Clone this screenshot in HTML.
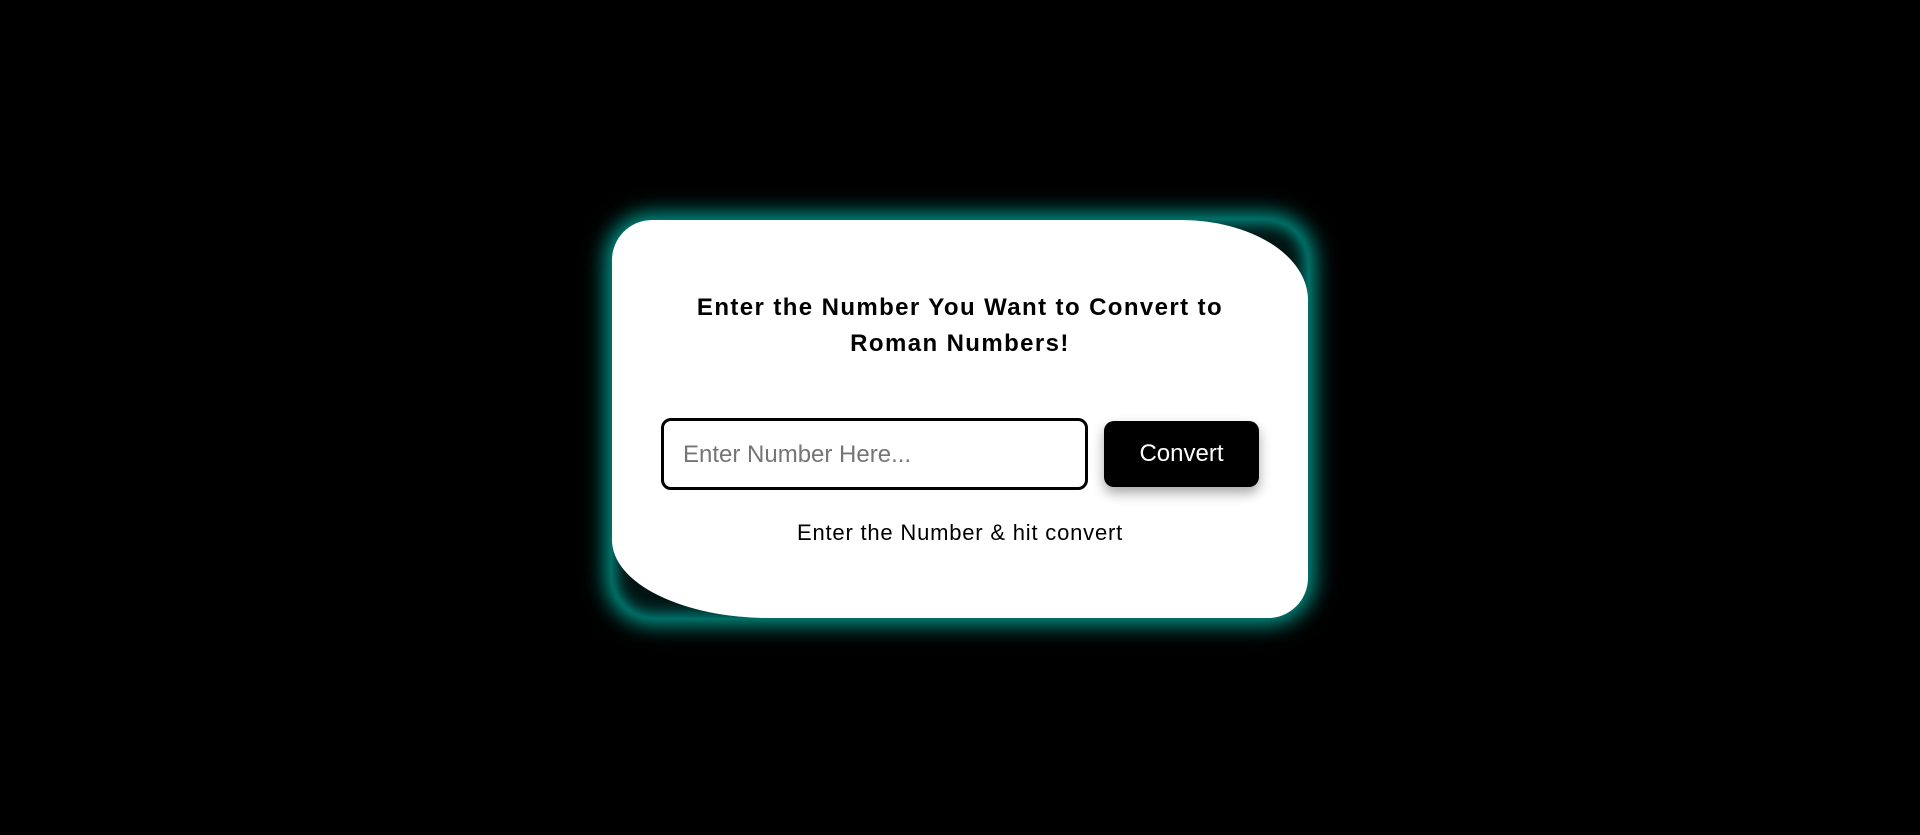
<!DOCTYPE html>
<html><head><meta charset="utf-8"><style>
html,body{margin:0;padding:0;background:#000;width:1920px;height:835px;overflow:hidden;}
.outer{position:absolute;left:612px;top:220px;width:696px;height:398px;border-radius:40px;background:#021413;
box-shadow:0 0 22px 6px rgba(0,180,165,0.9), inset 0 0 16px 3px rgba(0,160,150,0.95);}
.card{position:absolute;left:612px;top:220px;width:696px;height:398px;background:#fff;
border-radius:40px 127px 40px 157px / 40px 80px 40px 78px;font-family:"Liberation Sans",sans-serif;}
h1{position:absolute;left:0;right:0;top:70px;margin:0;text-align:center;font-size:24px;font-weight:bold;line-height:36px;padding:0 70px;letter-spacing:1.4px;}
.inp{position:absolute;left:49px;top:198px;width:421px;height:66px;border:3px solid #000;border-radius:10px;box-sizing:content-box;}
.inp span{position:absolute;left:19px;top:20px;font-size:24px;color:#757575;}
.btn{position:absolute;left:492px;top:201px;width:155px;height:66px;background:#000;border-radius:10px;color:#fff;font-size:24px;text-align:center;line-height:66px;box-shadow:0 6px 12px rgba(0,0,0,0.35);}
.sub{position:absolute;left:0;right:0;top:300px;text-align:center;font-size:22px;letter-spacing:0.8px;}
</style></head><body>
<div class="outer"></div>
<div class="card">
<h1>Enter the Number You Want to Convert to Roman Numbers!</h1>
<div class="inp"><span>Enter Number Here...</span></div>
<div class="btn">Convert</div>
<div class="sub">Enter the Number &amp; hit convert</div>
</div>
</body></html>
